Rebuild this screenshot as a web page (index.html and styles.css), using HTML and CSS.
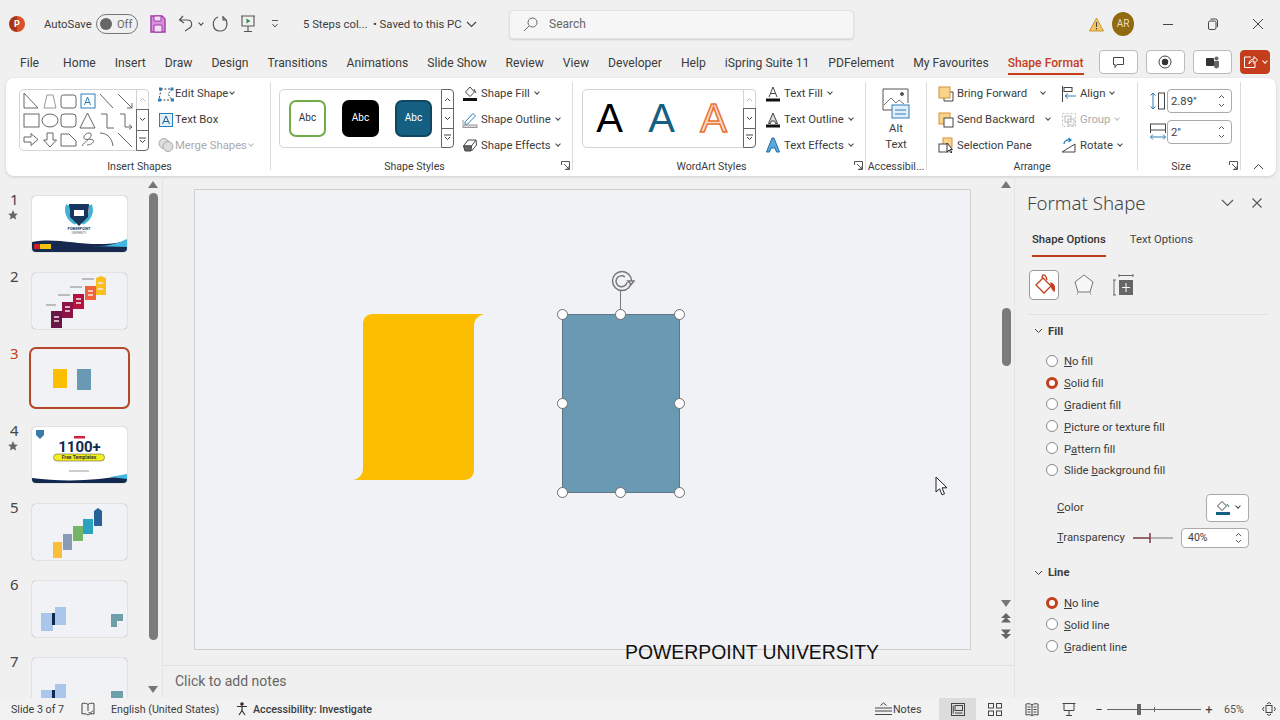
FILE: index.html
```html
<!DOCTYPE html>
<html lang="en">

<head>
    <meta charset="UTF-8">
    <meta name="viewport" content="width=device-width, initial-scale=1.0">
    <title>Format Shape</title>
    <link rel="stylesheet" href="styles.css">
</head>

<body>
    <div class="titlebar">
        <div class="app-logo">P</div>
        <span class="autosave">AutoSave</span>
        <div class="toggle"><span class="toggle-knob"></span><span>Off</span></div>
        <svg class="save-icon" width="16" height="18" viewBox="0 0 16 18"><path d="M1 1h11l3 3v13H1z" fill="#d98fdc" stroke="#a03aa8" stroke-width="1.4"/><path d="M4 1h7v5H4zM4 10h8v7H4z" fill="#f3dff3" stroke="#a03aa8"/></svg>
        <svg class="undo-icon" width="16" height="18" viewBox="0 0 16 18" fill="none" stroke="#555" stroke-width="1.2"><path d="M5 1L1.500 5 6 8M2 5h7c6 0 6 7 1 9l-3 2"/></svg>
        <span class="caret small-caret"></span>
        <svg class="redo-icon" width="16" height="18" viewBox="0 0 16 18" fill="none" stroke="#555" stroke-width="1.2"><path d="M6 2C-1 5 0 16 8 16s9-10 3-14M11 1v4h4"/></svg>
        <svg class="present-icon" width="16" height="18" viewBox="0 0 16 18" fill="none" stroke="#555" stroke-width="1.1"><path d="M1 1h14M2 1v10h12V1M8 11v5M4 16.500h8"/><path d="M6.500 3.500l4 2.500-4 2.500z" fill="#2e8b57" stroke="none"/></svg>
        <svg class="customize-icon" width="10" height="10" viewBox="0 0 10 10" fill="none" stroke="#555"><path d="M2 1.500h6M2.500 5l2.500 3 2.500-3"/></svg>
        <span class="doc-name">5 Steps col...</span>
        <span class="doc-state">• Saved to this PC</span>
        <svg class="doc-chevron" width="11" height="7" viewBox="0 0 11 7" fill="none" stroke="#444" stroke-width="1.1"><path d="M1 1l4.500 4.500L10 1"/></svg>
        <div class="search">
            <svg width="15" height="15" viewBox="0 0 15 15" fill="none" stroke="#666"><circle cx="9.500" cy="5.500" r="4.500"/><path d="M6 9l-5 5"/></svg>
            <span>Search</span>
        </div>
        <div class="title-right">
            <svg class="warn-icon" width="15" height="15" viewBox="0 0 15 15"><path d="M7.500 1L14.500 14H.5z" fill="#f6c667" stroke="#b8860b" stroke-width=".8"/><path d="M7.500 5v5M7.500 11v1.500" stroke="#444" stroke-width="1.1"/></svg>
            <div class="avatar">AR</div>
            <svg class="win-min" width="12" height="12" viewBox="0 0 12 12" stroke="#444"><path d="M1 6.500h10"/></svg>
            <svg class="win-restore" width="12" height="12" viewBox="0 0 12 12" fill="none" stroke="#444"><rect x="1.500" y="3" width="7.500" height="8.500" rx="1.500"/><path d="M3.500 1h5a2 2 0 012 2v6"/></svg>
            <svg class="win-close" width="12" height="12" viewBox="0 0 12 12" stroke="#444"><path d="M1 1l10 10M11 1L1 11"/></svg>
        </div>
    </div>

    <div class="tabs">
        <span class="tab tab-file">File</span>
        <span class="tab">Home</span>
        <span class="tab">Insert</span>
        <span class="tab">Draw</span>
        <span class="tab">Design</span>
        <span class="tab">Transitions</span>
        <span class="tab">Animations</span>
        <span class="tab">Slide Show</span>
        <span class="tab">Review</span>
        <span class="tab">View</span>
        <span class="tab">Developer</span>
        <span class="tab">Help</span>
        <span class="tab">iSpring Suite 11</span>
        <span class="tab">PDFelement</span>
        <span class="tab">My Favourites</span>
        <span class="tab tab-active">Shape Format</span>
        <div class="tab-buttons">
            <div class="tab-button"><svg width="13" height="13" viewBox="0 0 13 13" fill="none" stroke="#444"><path d="M1.500 1.500h10v7H5L3 11.500v-3H1.500z"/></svg></div>
            <div class="tab-button"><svg width="14" height="14" viewBox="0 0 14 14"><circle cx="7" cy="7" r="6" fill="none" stroke="#444"/><circle cx="7" cy="7" r="3.200" fill="#333"/></svg></div>
            <div class="tab-button"><svg width="15" height="14" viewBox="0 0 15 14"><rect x="1" y="3" width="8" height="8" rx="1" fill="#333"/><circle cx="11.500" cy="3.500" r="2" fill="#666"/><path d="M9 6h5v5a2.500 2.500 0 01-5 0z" fill="#666"/></svg></div>
            <div class="share-button">
                <svg width="15" height="14" viewBox="0 0 15 14" fill="none" stroke="#fff"><path d="M8 2H1.500v10.500H12V8M6 9c0-3 2-5 5-5V1.500L14.500 5 11 8.500V6C9 6 7 7 6 9z"/></svg>
                <span class="caret caret-white"></span>
            </div>
        </div>
    </div>

    <div class="ribbon">
        <div class="group group-shapes">
            <div class="group-body">
                <div class="gallery gallery-shapes">
                    <svg class="shapes-svg" width="116" height="59" viewBox="0 0 116 59" fill="none" stroke="#666" stroke-width="1">
                        <path d="M4 3v15h14z"/>
                        <path d="M24 18l3-13h6l3 13z" stroke="#999"/>
                        <rect x="41" y="5" width="15" height="13" rx="2.500"/>
                        <rect x="61" y="4" width="14" height="14" stroke="#2b7fb8"/>
                        <path d="M64.500 15l3-8 3 8M65.500 12.500h4" stroke="#2b7fb8"/>
                        <path d="M80 4l13 14"/>
                        <path d="M98 4l14 14M112 13v5h-5"/>
                        <rect x="4" y="24" width="15" height="13"/>
                        <ellipse cx="30" cy="30.500" rx="8" ry="6.500"/>
                        <rect x="41" y="24" width="15" height="13" rx="3"/>
                        <path d="M60 38l7.500-15L75 38z"/>
                        <path d="M81 24h6v14h7"/>
                        <path d="M100 24h5v13h6M109 34.500l3 2.500-3 2.500"/>
                        <path d="M4 47h7v-3.500l7 6-7 6V52H4z"/>
                        <path d="M27 43h6v7h3.500l-6.500 7-6.500-7H27z"/>
                        <path d="M41 44h8l7 7v5H41z"/>
                        <path d="M62 56c2-4 11-9 9-12s-8 1-7 4 7 0 9 2-2 5-6 5"/>
                        <path d="M80 43c7 0 12 5 13 13"/>
                        <path d="M98 43l14 14"/>
                    </svg>
                    <div class="gal-scroll">
                        <div class="gal-btn gal-off"><svg width="7" height="5" viewBox="0 0 7 5" fill="none" stroke="#bbb"><path d="M1 4l2.500-2.500L6 4"/></svg></div>
                        <div class="gal-btn gal-on"><svg width="7" height="5" viewBox="0 0 7 5" fill="none" stroke="#444"><path d="M1 1l2.500 2.500L6 1"/></svg></div>
                        <div class="gal-btn gal-on gal-last"><svg width="7" height="7" viewBox="0 0 7 7" fill="none" stroke="#444"><path d="M0 1h7M1 3l2.500 2.500L6 3"/></svg></div>
                    </div>
                </div>
                <div class="cmds cmds-edit">
                    <div class="cmd">
                        <svg width="18" height="16" viewBox="0 0 18 16" fill="none" stroke="#444"><path d="M4 3h11M3 14h13M15 3l-4 5 4 6M4 3L2 14" stroke-dasharray="2 1.500"/><rect x="2" y="1.500" width="3" height="3" fill="#2b7fb8" stroke="none"/><rect x="13.500" y="1.500" width="3" height="3" fill="#2b7fb8" stroke="none"/><rect x="1" y="12.500" width="3" height="3" fill="#2b7fb8" stroke="none"/><rect x="14" y="12.500" width="3" height="3" fill="#2b7fb8" stroke="none"/></svg>
                        <span>Edit Shape</span><span class="caret"></span>
                    </div>
                    <div class="cmd">
                        <svg width="18" height="16" viewBox="0 0 18 16" fill="none" stroke="#2b7fb8"><rect x="2.500" y="1.500" width="13" height="13" fill="#e2eff8"/><path d="M5.500 12l3.500-8 3.500 8M6.800 9.500h4.400" stroke="#1f5f8b"/></svg>
                        <span>Text Box</span>
                    </div>
                    <div class="cmd cmd-off">
                        <svg width="18" height="16" viewBox="0 0 18 16" fill="#ddd" stroke="#aaa"><circle cx="7" cy="6.500" r="5"/><circle cx="11" cy="9.500" r="5"/></svg>
                        <span>Merge Shapes</span><span class="caret caret-off"></span>
                    </div>
                </div>
            </div>
            <div class="group-label">Insert Shapes</div>
        </div>
        <div class="ribbon-sep"></div>

        <div class="group group-styles">
            <div class="group-body">
                <div class="gallery gallery-styles">
                    <div class="abc-row">
                        <div class="abc abc-green">Abc</div>
                        <div class="abc abc-black">Abc</div>
                        <div class="abc abc-blue">Abc</div>
                    </div>
                    <div class="gal-scroll">
                        <div class="gal-btn gal-on"><svg width="7" height="5" viewBox="0 0 7 5" fill="none" stroke="#444"><path d="M1 4l2.500-2.500L6 4"/></svg></div>
                        <div class="gal-btn gal-on"><svg width="7" height="5" viewBox="0 0 7 5" fill="none" stroke="#444"><path d="M1 1l2.500 2.500L6 1"/></svg></div>
                        <div class="gal-btn gal-on gal-last"><svg width="7" height="7" viewBox="0 0 7 7" fill="none" stroke="#444"><path d="M0 1h7M1 3l2.500 2.500L6 3"/></svg></div>
                    </div>
                </div>
                <div class="cmds cmds-fill">
                    <div class="cmd">
                        <svg width="16" height="16" viewBox="0 0 16 16" fill="none" stroke="#444"><path d="M8 1l4.500 5L8 10.500 3.500 6z"/><path d="M12 3l2 4"/><rect x="1" y="12" width="14" height="3" fill="#111" stroke="none"/></svg>
                        <span>Shape Fill</span><span class="caret"></span>
                    </div>
                    <div class="cmd">
                        <svg width="16" height="16" viewBox="0 0 16 16" fill="none" stroke="#2b7fb8"><path d="M3 10L11 1.500l2.500 2.500L5.500 12 3 12.500z"/><path d="M1 8v4" stroke="#999"/><rect x="1" y="13" width="14" height="2.500" fill="#ddd" stroke="#999"/></svg>
                        <span>Shape Outline</span><span class="caret"></span>
                    </div>
                    <div class="cmd">
                        <svg width="16" height="16" viewBox="0 0 16 16" stroke="#444"><path d="M1.500 9L6 3h8L9.500 9z" fill="#fff"/><path d="M1.500 9l1.500 5h6l.5-5z" fill="#666"/><path d="M14 3l.5 5-5 6" fill="none"/></svg>
                        <span>Shape Effects</span><span class="caret"></span>
                    </div>
                </div>
            </div>
            <div class="group-label">Shape Styles</div>
            <svg class="launcher" width="9" height="9" viewBox="0 0 9 9" fill="none" stroke="#555"><path d="M.5 4V.5H8.500V8.500H4M3 3l5 5M8 5v3H5"/></svg>
        </div>
        <div class="ribbon-sep"></div>

        <div class="group group-wordart">
            <div class="group-body">
                <div class="gallery gallery-wordart">
                    <div class="wa-row">
                        <span class="wa wa-black">A</span>
                        <span class="wa wa-blue">A</span>
                        <span class="wa wa-orange">A</span>
                    </div>
                    <div class="gal-scroll">
                        <div class="gal-btn gal-off"><svg width="7" height="5" viewBox="0 0 7 5" fill="none" stroke="#bbb"><path d="M1 4l2.500-2.500L6 4"/></svg></div>
                        <div class="gal-btn gal-on"><svg width="7" height="5" viewBox="0 0 7 5" fill="none" stroke="#444"><path d="M1 1l2.500 2.500L6 1"/></svg></div>
                        <div class="gal-btn gal-on gal-last"><svg width="7" height="7" viewBox="0 0 7 7" fill="none" stroke="#444"><path d="M0 1h7M1 3l2.500 2.500L6 3"/></svg></div>
                    </div>
                </div>
                <div class="cmds cmds-text">
                    <div class="cmd">
                        <svg width="16" height="16" viewBox="0 0 16 16" fill="none" stroke="#444"><path d="M4 11l4-10 4 10M5.500 7.500h5"/><rect x="1" y="12.500" width="14" height="3" fill="#111" stroke="none"/></svg>
                        <span>Text Fill</span><span class="caret"></span>
                    </div>
                    <div class="cmd">
                        <svg width="16" height="16" viewBox="0 0 16 16" fill="#ddd" stroke="#444"><path d="M3.500 11.500L8 1l4.500 10.500h-2L9.800 9H6.200l-.7 2.500z"/><rect x="1" y="12.500" width="14" height="3" fill="#111" stroke="none"/></svg>
                        <span>Text Outline</span><span class="caret"></span>
                    </div>
                    <div class="cmd">
                        <svg width="16" height="16" viewBox="0 0 16 16" fill="#5fa8dc" stroke="#1f6fa8"><path d="M1.500 15L7 1h2l5.500 14h-3L10 11H6l-1.500 4z"/></svg>
                        <span>Text Effects</span><span class="caret"></span>
                    </div>
                </div>
            </div>
            <div class="group-label">WordArt Styles</div>
            <svg class="launcher" width="9" height="9" viewBox="0 0 9 9" fill="none" stroke="#555"><path d="M.5 4V.5H8.500V8.500H4M3 3l5 5M8 5v3H5"/></svg>
        </div>
        <div class="ribbon-sep"></div>

        <div class="group group-alt">
            <div class="group-body alt-body">
                <svg width="28" height="32" viewBox="0 0 28 32" fill="none" stroke="#555"><path d="M10 22H1V1h25v14"/><path d="M2 17l7-7 5 5 3-3 5 4" stroke="#777"/><circle cx="20" cy="6" r="1.500" fill="#555"/><rect x="10" y="17" width="17" height="13" fill="#e2eff8" stroke="#2b7fb8"/><path d="M13 22h11M13 26h11" stroke="#2b7fb8"/></svg>
                <span class="alt-text">Alt<br>Text</span>
            </div>
            <div class="group-label">Accessibil...</div>
        </div>
        <div class="ribbon-sep"></div>

        <div class="group group-arrange">
            <div class="group-body">
                <div class="cmds cmds-order">
                    <div class="cmd">
                        <svg width="16" height="16" viewBox="0 0 16 16"><path d="M12 6h3v9H6v-3" fill="none" stroke="#444"/><rect x="1" y="1" width="11" height="11" fill="#f9d38a" stroke="#d8913a"/></svg>
                        <span class="cmd-wide">Bring Forward</span><span class="caret"></span>
                    </div>
                    <div class="cmd">
                        <svg width="16" height="16" viewBox="0 0 16 16"><rect x="1" y="1" width="11" height="11" fill="#f9d38a" stroke="#d8913a"/><rect x="6" y="6" width="9" height="9" fill="#fff" stroke="#444"/></svg>
                        <span class="cmd-wider">Send Backward</span><span class="caret"></span>
                    </div>
                    <div class="cmd">
                        <svg width="16" height="16" viewBox="0 0 16 16"><rect x="5" y="1" width="9" height="9" fill="#f9d38a" stroke="#d8913a"/><rect x="1" y="7" width="9" height="8" fill="#fff" stroke="#444"/><path d="M9 6v9l2-2 2 3 1-1-2-2.500h2.500z" fill="#fff" stroke="#333"/></svg>
                        <span>Selection Pane</span>
                    </div>
                </div>
                <div class="cmds cmds-align">
                    <div class="cmd">
                        <svg width="16" height="16" viewBox="0 0 16 16" fill="none" stroke="#444"><path d="M1.500 0v16"/><rect x="3" y="1.500" width="8" height="4"/><path d="M15 10H4M7 7.500L4 10l3 2.500" stroke="#2b7fb8"/></svg>
                        <span>Align</span><span class="caret"></span>
                    </div>
                    <div class="cmd cmd-off">
                        <svg width="16" height="16" viewBox="0 0 16 16" fill="none" stroke="#bbb"><rect x="1.500" y="1.500" width="13" height="13" stroke-dasharray="2 2"/><rect x="4" y="4" width="6" height="6"/><rect x="7" y="7" width="6" height="6"/></svg>
                        <span>Group</span><span class="caret caret-off"></span>
                    </div>
                    <div class="cmd">
                        <svg width="16" height="16" viewBox="0 0 16 16" fill="none" stroke="#444"><path d="M1 15L14 7v8z"/><path d="M3 7c0-3 3-5 7-4M7.500 1l2.500 2-2.500 2" stroke="#2b7fb8" stroke-width="1.300"/></svg>
                        <span>Rotate</span><span class="caret"></span>
                    </div>
                </div>
            </div>
            <div class="group-label">Arrange</div>
        </div>
        <div class="ribbon-sep"></div>

        <div class="group group-size">
            <div class="group-body size-body">
                <div class="size-row">
                    <svg width="18" height="20" viewBox="0 0 18 20" fill="none"><path d="M4 2v16M1.500 4.500L4 2l2.500 2.500M1.500 15.500L4 18l2.500-2.500" stroke="#2b7fb8"/><rect x="9.500" y="2" width="6" height="16" stroke="#444"/></svg>
                    <div class="spin"><span>2.89"</span><div class="spin-arrows"><svg width="7" height="5" viewBox="0 0 7 5" fill="none" stroke="#555"><path d="M1 4l2.500-2.500L6 4"/></svg><svg width="7" height="5" viewBox="0 0 7 5" fill="none" stroke="#555"><path d="M1 1l2.500 2.500L6 1"/></svg></div></div>
                </div>
                <div class="size-row">
                    <svg width="18" height="20" viewBox="0 0 18 20" fill="none"><rect x="1.500" y="2" width="15" height="6" stroke="#444"/><path d="M1.500 8v3M16.500 8v3" stroke="#444"/><path d="M1.500 15h15M4 12.500L1.500 15 4 17.500M14 12.500l2.500 2.500-2.500 2.500" stroke="#2b7fb8"/></svg>
                    <div class="spin"><span>2"</span><div class="spin-arrows"><svg width="7" height="5" viewBox="0 0 7 5" fill="none" stroke="#555"><path d="M1 4l2.500-2.500L6 4"/></svg><svg width="7" height="5" viewBox="0 0 7 5" fill="none" stroke="#555"><path d="M1 1l2.500 2.500L6 1"/></svg></div></div>
                </div>
            </div>
            <div class="group-label">Size</div>
            <svg class="launcher" width="9" height="9" viewBox="0 0 9 9" fill="none" stroke="#555"><path d="M.5 4V.5H8.500V8.500H4M3 3l5 5M8 5v3H5"/></svg>
        </div>
        <div class="ribbon-sep"></div>
        <svg class="ribbon-collapse" width="11" height="7" viewBox="0 0 11 7" fill="none" stroke="#444"><path d="M1 6l4.500-4.500L10 6"/></svg>
    </div>

    <div class="main">
        <div class="slides-panel">
            <div class="slides-list">
                <div class="slide-row">
                    <div class="slide-num">1<svg width="10" height="10" viewBox="0 0 10 10"><path d="M5 0l1.500 3.400 3.500.3-2.700 2.300.8 3.600L5 7.700 1.900 9.600l.8-3.600L0 3.700l3.500-.3z" fill="#666"/></svg></div>
                    <div class="thumb thumb-white">
                        <svg width="95" height="56" viewBox="0 0 95 56">
                            <path d="M36 9c-3 7 1 15 8 18M58 9c3 7-1 15-8 18" fill="none" stroke="#3fb4d4" stroke-width="4"/>
                            <path d="M37 8h20l-1 13-9 9-9-9z" fill="#17375e"/>
                            <rect x="42" y="14" width="10" height="6" fill="#fff"/>
                            <text x="47" y="34" text-anchor="middle" font-size="3.600" font-weight="700" fill="#17375e" font-family="Liberation Sans">POWERPOINT</text>
                            <text x="47" y="38" text-anchor="middle" font-size="2.600" fill="#555" font-family="Liberation Sans">UNIVERSITY</text>
                            <path d="M0 46c30-6 55 8 95-1v11H0z" fill="#17294f"/>
                            <path d="M60 50c14 1 24-2 35-7v8z" fill="#45b6e0"/>
                            <rect x="2" y="48" width="6" height="5" fill="#c8202f"/>
                            <rect x="8" y="48" width="11" height="5" fill="#f2c40f"/>
                        </svg>
                    </div>
                </div>
                <div class="slide-row">
                    <div class="slide-num">2</div>
                    <div class="thumb">
                        <svg width="95" height="56" viewBox="0 0 95 56">
                            <rect x="19" y="38" width="11" height="17" fill="#6b1648"/>
                            <rect x="30" y="29" width="11" height="16" fill="#8c1345"/>
                            <rect x="41" y="21" width="11" height="15" fill="#b5123f"/>
                            <rect x="53" y="13" width="11" height="14" fill="#f0643c"/>
                            <path d="M64 5l5-2 5 2v17H64z" fill="#fbbe1e"/>
                            <path d="M22 44h5M22 48h5M33 34h5M33 38h5M44 26h5M44 30h5M56 18h5M56 22h5M66 10h5M66 16h5" stroke="#f4e6e6" stroke-width="1.500"/>
                            <path d="M14 32h10M26 22h12M38 14h12M50 6h12" stroke="#aaa" stroke-width="1.500"/>
                        </svg>
                    </div>
                </div>
                <div class="slide-row">
                    <div class="slide-num slide-num-active">3</div>
                    <div class="thumb thumb-active">
                        <svg width="95" height="56" viewBox="0 0 95 56">
                            <rect x="21" y="19" width="14" height="19" fill="#fdbd00"/>
                            <rect x="45" y="19" width="14" height="21" fill="#6a99b3"/>
                        </svg>
                    </div>
                </div>
                <div class="slide-row">
                    <div class="slide-num">4<svg width="10" height="10" viewBox="0 0 10 10"><path d="M5 0l1.500 3.400 3.500.3-2.700 2.300.8 3.600L5 7.700 1.900 9.600l.8-3.600L0 3.700l3.500-.3z" fill="#666"/></svg></div>
                    <div class="thumb thumb-white">
                        <svg width="95" height="56" viewBox="0 0 95 56">
                            <path d="M4 3h8v5l-4 4-4-4z" fill="#3a7ca5"/>
                            <rect x="42" y="9" width="11" height="2.500" fill="#d0213c"/>
                            <text x="47.500" y="25" text-anchor="middle" font-size="15" font-weight="700" fill="#12294f" font-family="Liberation Sans">1100+</text>
                            <rect x="21.500" y="27" width="51" height="7" rx="3.500" fill="#f2ee20" stroke="#444" stroke-width=".5"/>
                            <text x="47" y="32.300" text-anchor="middle" font-size="5" font-weight="700" fill="#333" font-family="Liberation Sans">Free Templates</text>
                            <path d="M37 44h20" stroke="#999" stroke-width="1"/>
                            <path d="M0 51c30 4 65 3 95-3v8H0z" fill="#12294f"/>
                            <path d="M78 50l17-3v5z" fill="#45b6e0"/>
                        </svg>
                    </div>
                </div>
                <div class="slide-row">
                    <div class="slide-num">5</div>
                    <div class="thumb">
                        <svg width="95" height="56" viewBox="0 0 95 56">
                            <rect x="21" y="38" width="9" height="16" fill="#f9bf3b"/>
                            <rect x="31" y="30" width="9" height="16" fill="#8a9bb5"/>
                            <rect x="41" y="22" width="10" height="15" fill="#74b567"/>
                            <rect x="51" y="15" width="10" height="15" fill="#2ba3bf"/>
                            <path d="M62 7l4-3 4 3v15h-8z" fill="#27629b"/>
                        </svg>
                    </div>
                </div>
                <div class="slide-row">
                    <div class="slide-num">6</div>
                    <div class="thumb">
                        <svg width="95" height="56" viewBox="0 0 95 56">
                            <rect x="9" y="32" width="12" height="18" fill="#aac6ea"/>
                            <rect x="23" y="26" width="11" height="18" fill="#aac6ea"/>
                            <rect x="20" y="32" width="3" height="12" fill="#12294f"/>
                            <path d="M79 33h12v7h-6v6h-6z" fill="#6f9fa8"/>
                        </svg>
                    </div>
                </div>
                <div class="slide-row">
                    <div class="slide-num">7</div>
                    <div class="thumb">
                        <svg width="95" height="56" viewBox="0 0 95 56">
                            <rect x="9" y="32" width="12" height="18" fill="#aac6ea"/>
                            <rect x="23" y="26" width="11" height="18" fill="#aac6ea"/>
                            <rect x="20" y="32" width="3" height="12" fill="#12294f"/>
                            <path d="M79 33h12v7h-6v6h-6z" fill="#6f9fa8"/>
                        </svg>
                    </div>
                </div>
            </div>
            <div class="panel-scroll">
                <span class="arrow-up"></span>
                <div class="panel-thumb"></div>
                <span class="arrow-down"></span>
            </div>
        </div>

        <div class="editor">
            <div class="canvas-area">
                <div class="slide">
                    <svg class="shape-yellow" width="132" height="166" viewBox="0 0 132 166"><path d="M0 166c6-1 10-5 10-12V10C10 4 14 0 20 0h111c-6 2-10 5-10 12v144c0 6-4 10-10 10z" fill="#fdbd00"/></svg>
                    <div class="shape-blue">
                        <span class="handle h-tl"></span><span class="handle h-tc"></span><span class="handle h-tr"></span>
                        <span class="handle h-ml"></span><span class="handle h-mr"></span>
                        <span class="handle h-bl"></span><span class="handle h-bc"></span><span class="handle h-br"></span>
                        <span class="rotate-line"></span>
                        <svg class="rotate-icon" width="24" height="24" viewBox="0 0 24 24" fill="none" stroke="#777" stroke-width="1.500"><circle cx="11" cy="12" r="9.500"/><path d="M16 13a5.500 5.500 0 11-2-5"/><path d="M17 12l3 3.500 3-3.500z" fill="#fff"/></svg>
                    </div>
                </div>
                <div class="canvas-scroll">
                    <span class="arrow-up"></span>
                    <div class="canvas-thumb"></div>
                    <span class="arrow-down"></span>
                    <svg class="page-arrow" width="10" height="10" viewBox="0 0 10 10" fill="#666"><path d="M5 0L10 5H0zM5 4L10 9.500H0z"/></svg>
                    <svg class="page-arrow" width="10" height="10" viewBox="0 0 10 10" fill="#666"><path d="M5 6L10 .5H0zM5 10L10 5H0z"/></svg>
                </div>
            </div>
            <div class="notes-bar">Click to add notes</div>
        </div>

        <div class="format-pane">
            <div class="pane-head">
                <span class="pane-title">Format Shape</span>
                <svg class="pane-chevron" width="13" height="8" viewBox="0 0 13 8" fill="none" stroke="#555" stroke-width="1.100"><path d="M1 1l5.500 5.500L12 1"/></svg>
                <svg class="pane-close" width="10" height="10" viewBox="0 0 10 10" stroke="#555" stroke-width="1.100"><path d="M.5.5l9 9M9.500.5l-9 9"/></svg>
            </div>
            <div class="pane-tabs">
                <span class="pane-tab pane-tab-active">Shape Options</span>
                <span class="pane-tab">Text Options</span>
            </div>
            <div class="pane-icons">
                <div class="pane-icon pane-icon-active">
                    <svg width="24" height="24" viewBox="0 0 24 24" fill="none" stroke="#c43e1c" stroke-width="1.300"><path d="M11 5l8 8-7 7-8-8z"/><path d="M10 5c0-4 3-4 4-1l1 3"/><path d="M19 10c3 1 4 4 3 8-2-2-3-4-3-8z" fill="#c43e1c"/></svg>
                </div>
                <svg class="pane-icon-pent" width="22" height="24" viewBox="0 0 22 24" fill="none" stroke="#777"><path d="M11 2l9 7-3 10H5L2 9z" fill="#f7f7f7"/><path d="M5 19l-1 3M17 19l1 3" stroke="#aaa"/></svg>
                <svg class="pane-icon-size" width="21" height="22" viewBox="0 0 21 22" fill="none" stroke="#666"><path d="M6 1.500h14M6 0v3M20 0v3M1 6v15M0 6h3M0 21h3"/><rect x="6" y="6" width="14" height="15" fill="#666" stroke="none"/><path d="M13 9v9M9 13.500h8" stroke="#fff"/></svg>
            </div>
            <div class="pane-rule"></div>

            <div class="section-head">
                <svg width="9" height="6" viewBox="0 0 9 6" fill="none" stroke="#444"><path d="M1 1l3.500 3.500L8 1"/></svg>
                <span>Fill</span>
            </div>
            <div class="radios">
                <div class="radio-row"><span class="radio"></span><span><u>N</u>o fill</span></div>
                <div class="radio-row"><span class="radio radio-on"></span><span><u>S</u>olid fill</span></div>
                <div class="radio-row"><span class="radio"></span><span><u>G</u>radient fill</span></div>
                <div class="radio-row"><span class="radio"></span><span><u>P</u>icture or texture fill</span></div>
                <div class="radio-row"><span class="radio"></span><span>P<u>a</u>ttern fill</span></div>
                <div class="radio-row"><span class="radio"></span><span>Slide <u>b</u>ackground fill</span></div>
            </div>
            <div class="color-row">
                <span><u>C</u>olor</span>
                <div class="color-btn">
                    <svg width="16" height="16" viewBox="0 0 16 16" fill="none" stroke="#444"><path d="M7 1.500l4.500 4.500L7 10.500 2.500 6z"/><path d="M12 4l2 3" stroke="#156082"/><rect x="1" y="12" width="14" height="3" fill="#156082" stroke="none"/></svg>
                    <span class="caret"></span>
                </div>
            </div>
            <div class="trans-row">
                <span><u>T</u>ransparency</span>
                <svg class="trans-slider" width="40" height="12" viewBox="0 0 40 12"><path d="M0 6h17" stroke="#7a3a44" stroke-width="1.500"/><path d="M17 6h23" stroke="#777"/><path d="M17 1v10" stroke="#7a3a44" stroke-width="1.500"/></svg>
                <div class="spin spin-trans"><span>40%</span><div class="spin-arrows"><svg width="7" height="5" viewBox="0 0 7 5" fill="none" stroke="#555"><path d="M1 4l2.500-2.500L6 4"/></svg><svg width="7" height="5" viewBox="0 0 7 5" fill="none" stroke="#555"><path d="M1 1l2.500 2.500L6 1"/></svg></div></div>
            </div>
            <div class="section-head section-line">
                <svg width="9" height="6" viewBox="0 0 9 6" fill="none" stroke="#444"><path d="M1 1l3.500 3.500L8 1"/></svg>
                <span>Line</span>
            </div>
            <div class="radios">
                <div class="radio-row"><span class="radio radio-on"></span><span><u>N</u>o line</span></div>
                <div class="radio-row"><span class="radio"></span><span><u>S</u>olid line</span></div>
                <div class="radio-row"><span class="radio"></span><span><u>G</u>radient line</span></div>
            </div>
        </div>
    </div>

    <div class="statusbar">
        <span class="st-slide">Slide 3 of 7</span>
        <svg class="st-book" width="14" height="14" viewBox="0 0 14 14" fill="none" stroke="#444"><path d="M7 2.500C5.500 1 3 1 1 1.500V12c2-.5 4-.5 6 1 2-1.500 4-1.500 6-1V1.500C11 1 8.500 1 7 2.500zM7 2.500V9"/><path d="M7.500 10l1.500 1.500 3-3"/></svg>
        <span class="st-lang">English (United States)</span>
        <svg class="st-access" width="14" height="14" viewBox="0 0 14 14" fill="none" stroke="#333" stroke-width="1.200"><circle cx="6" cy="2" r="1.200" fill="#333"/><path d="M1 4.500h10M6 4.500v4M6 8.500L3 13M6 8.500l3 4.500"/></svg>
        <span class="st-check">Accessibility: Investigate</span>
        <div class="st-right">
            <svg class="st-notes-icon" width="17" height="14" viewBox="0 0 17 14" fill="none" stroke="#444"><path d="M5.500 3.500L8.500 1l3 2.500M0 6h17M0 9h17M0 12.500h17"/></svg>
            <span class="st-notes">Notes</span>
            <div class="view-btn view-active"><svg width="14" height="13" viewBox="0 0 14 13" fill="none" stroke="#444"><rect x=".5" y=".5" width="13" height="12"/><rect x="4" y="2.500" width="7.500" height="5"/><path d="M2.200 2.500v8M4 10h7.500"/></svg></div>
            <div class="view-btn"><svg width="14" height="13" viewBox="0 0 14 13" fill="none" stroke="#444"><rect x=".5" y=".5" width="5" height="4.500"/><rect x="8.500" y=".5" width="5" height="4.500"/><rect x=".5" y="8" width="5" height="4.500"/><rect x="8.500" y="8" width="5" height="4.500"/></svg></div>
            <div class="view-btn"><svg width="14" height="13" viewBox="0 0 14 13" fill="none" stroke="#444"><path d="M7 2C5 .5 3 .5 1 1v11c2-.5 4-.5 6 .5 2-1 4-1 6-.5V1c-2-.5-4-.5-6 1zM7 2v10.500M2.500 4h3M2.500 6.500h3M2.500 9h3M8.500 4h3M8.500 6.500h3M8.500 9h3"/></svg></div>
            <div class="view-btn"><svg width="14" height="13" viewBox="0 0 14 13" fill="none" stroke="#444"><path d="M.5.500h13M2 .5v7h10v-7M7 7.500V12M4 12.500h6"/></svg></div>
            <span class="zoom-sign zoom-minus">−</span>
            <div class="zoom-track"><span class="zoom-knob"></span><span class="zoom-mid"></span></div>
            <span class="zoom-sign">+</span>
            <span class="zoom-val">65%</span>
            <svg class="zoom-fit" width="14" height="14" viewBox="0 0 14 14" fill="none" stroke="#444"><rect x="4" y="3.500" width="6" height="7"/><path d="M5 2l2-1.500L9 2M5 12l2 1.500L9 12M2 5L.5 7 2 9M12 5l1.500 2L12 9"/></svg>
        </div>
    </div>

    <span class="watermark">POWERPOINT UNIVERSITY</span>
    <svg class="cursor" width="13" height="20" viewBox="0 0 13 20"><path d="M1 1v15l3.500-3.200 2.500 6 2.500-1-2.500-6H12z" fill="#fff" stroke="#222"/></svg>
</body>

</html>
```

FILE: styles.css
```css
* {
    margin: 0;
    padding: 0;
    box-sizing: border-box;
    font-family: Roboto, "Noto Sans", sans-serif;
}

body {
    position: relative;
    width: 1280px;
    height: 720px;
    overflow: hidden;
    background-color: #f0f0f0;
    color: #3c3c3c;
    font-size: 11.3px;
    display: flex;
    flex-direction: column;
}

svg {
    display: block;
    flex: none;
}

.caret {
    display: inline-block;
    width: 4px;
    height: 4px;
    margin-left: 2px;
    margin-top: -3px;
    border-right: 1px solid #444;
    border-bottom: 1px solid #444;
    transform: rotate(45deg);
    flex: none;
}

.small-caret {
    margin-left: 5px;
}

.caret-white {
    border-color: #fff;
    margin-left: 5px;
}

.caret-off {
    border-color: #bbb;
}

/* title bar */
.titlebar {
    height: 48px;
    display: flex;
    align-items: center;
    flex: none;
    padding-left: 9px;
}

.app-logo {
    width: 16px;
    height: 16px;
    border-radius: 50%;
    background: linear-gradient(90deg, #a93415 50%, #d9512c 50%);
    color: white;
    font-size: 9px;
    font-weight: 700;
    line-height: 16px;
    text-align: center;
}

.autosave {
    margin-left: 19px;
    width: 46px;
    white-space: nowrap;
}

.toggle {
    margin-left: 6px;
    width: 42px;
    height: 20px;
    border: 1px solid #777;
    border-radius: 10px;
    display: flex;
    align-items: center;
    gap: 5px;
    padding-left: 3px;
    font-size: 11px;
    color: #666;
}

.toggle-knob {
    width: 12px;
    height: 12px;
    border-radius: 50%;
    background-color: #666;
}

.save-icon {
    margin-left: 12px;
}

.undo-icon {
    margin-left: 12px;
}

.redo-icon {
    margin-left: 9px;
}

.present-icon {
    margin-left: 12px;
}

.customize-icon {
    margin-left: 14px;
}

.doc-name {
    margin-left: 23px;
    width: 62px;
    white-space: nowrap;
}

.doc-state {
    margin-left: 8px;
    width: 90px;
    white-space: nowrap;
}

.doc-chevron {
    margin-left: 3px;
}

.search {
    margin-left: 32px;
    width: 345px;
    height: 29px;
    background-color: #f6f6f6;
    border: 1px solid #e2e2e2;
    border-radius: 4px;
    box-shadow: 0 1px 2px rgba(0, 0, 0, 0.12);
    display: flex;
    align-items: center;
    gap: 11px;
    padding-left: 13px;
    color: #666;
    font-size: 12px;
}

.title-right {
    margin-left: auto;
    display: flex;
    align-items: center;
    padding-right: 16px;
}

.avatar {
    margin-left: 8px;
    width: 22px;
    height: 24px;
    border-radius: 50%;
    background-color: #8f6a10;
    color: #e8dcc0;
    font-size: 10px;
    line-height: 24px;
    text-align: center;
}

.win-min {
    margin-left: 28px;
}

.win-restore {
    margin-left: 33px;
}

.win-close {
    margin-left: 33px;
}

/* tabs */
.tabs {
    height: 30px;
    display: flex;
    align-items: flex-start;
    flex: none;
    padding: 5px 10px 0 20px;
    gap: 19px;
    font-size: 12.15px;
}

.tab {
    white-space: nowrap;
    line-height: 20px;
    height: 22px;
}

.tab-file {
    margin-right: 5px;
}

.tab-active {
    color: #c43e1c;
    font-weight: 500;
    border-bottom: 2px solid #c43e1c;
}

.tab-buttons {
    display: flex;
    gap: 8px;
    margin-left: -4px;
    margin-top: -3px;
}

.tab-button,
.share-button {
    width: 39px;
    height: 24px;
    background-color: white;
    border: 1px solid #bbb;
    border-radius: 4px;
    display: flex;
    align-items: center;
    justify-content: center;
}

.share-button {
    width: 30px;
    background-color: #c43e1c;
    border-color: #c43e1c;
}

/* ribbon */
.ribbon {
    height: 98px;
    margin: 0 4px 0 6px;
    background-color: white;
    border-radius: 8px;
    box-shadow: 0 1px 3px rgba(0, 0, 0, 0.15);
    display: flex;
    flex: none;
}

.ribbon-sep {
    width: 1px;
    margin: 4px 0 6px;
    background-color: #dcdcdc;
    flex: none;
}

.group {
    position: relative;
    display: flex;
    flex-direction: column;
    flex: none;
}

.group-body {
    height: 80px;
    display: flex;
    flex: none;
}

.group-label {
    height: 18px;
    line-height: 18px;
    text-align: center;
    font-size: 10.6px;
    white-space: nowrap;
}

.launcher {
    position: absolute;
    right: 2px;
    bottom: 6px;
}

.group-shapes {
    width: 264px;
    padding-left: 13px;
}

.group-shapes .group-label {
    margin-left: -5px;
    margin-right: 5px;
}

.group-styles {
    width: 301px;
    padding-left: 8px;
}

.group-styles .group-label {
    padding-right: 22px;
}

.group-wordart {
    width: 292px;
    padding-left: 9px;
}

.group-wordart .group-label {
    padding-right: 24px;
}

.group-alt {
    width: 60px;
}

.group-arrange {
    width: 210px;
    padding-left: 11px;
}

.group-arrange .group-label {
    margin-left: -11px;
}

.group-size {
    width: 102px;
}

.group-size .group-label {
    padding-right: 16px;
}

.gallery {
    margin-top: 11px;
    background-color: white;
    border: 1px solid #d4d4d4;
    border-radius: 5px;
    display: flex;
    justify-content: space-between;
    align-self: flex-start;
    flex: none;
}

.gallery-shapes {
    width: 130px;
    height: 62px;
}

.gallery-styles {
    width: 175px;
    height: 59px;
}

.gallery-wordart {
    width: 174px;
    height: 59px;
}

.gal-scroll {
    width: 13px;
    display: flex;
    flex-direction: column;
    margin: -1px -1px -1px 0;
    flex: none;
}

.gal-btn {
    flex: 1;
    display: flex;
    align-items: center;
    justify-content: center;
    border: 1px solid #666;
    margin-top: -1px;
    background-color: white;
}

.gal-btn:first-child {
    margin-top: 0;
    border-radius: 0 4px 0 0;
}

.gal-off {
    border-color: #d4d4d4;
}

.gal-last {
    border-radius: 0 0 4px 0;
}

.cmds {
    margin-top: 3px;
    display: flex;
    flex-direction: column;
    flex: none;
}

.cmd {
    height: 26px;
    display: flex;
    align-items: center;
    gap: 3px;
    white-space: nowrap;
}

.cmd-off {
    color: #aaa;
}

.cmds-edit {
    margin-left: 8px;
}

.cmds-edit .cmd {
    gap: 0;
}

.cmds-fill {
    margin-left: 8px;
}

.cmds-text {
    margin-left: 9px;
}

.cmds-align {
    margin-left: 0;
}

.cmds-order {
    width: 123px;
}

.cmd-wide {
    width: 79px;
}

.cmd-wider {
    width: 84px;
}

.abc-row {
    display: flex;
    gap: 16px;
    padding: 10px 0 0 9px;
}

.abc {
    width: 37px;
    height: 37px;
    border-radius: 7px;
    font-size: 10px;
    line-height: 31px;
    text-align: center;
    border: 2px solid transparent;
}

.abc-green {
    border-color: #70ad47;
    background-color: white;
    color: #333;
}

.abc-black {
    background-color: black;
    color: white;
}

.abc-blue {
    background-color: #156082;
    border-color: #0f4761;
    color: white;
}

.wa-row {
    display: flex;
    gap: 25px;
    padding-left: 13px;
    align-items: center;
}

.wa {
    font-family: "Liberation Sans", sans-serif;
    font-size: 40px;
    line-height: 57px;
    width: 27px;
    text-align: center;
}

.wa-black {
    color: black;
}

.wa-blue {
    color: #156082;
}

.wa-orange {
    color: #fbdccb;
    -webkit-text-stroke: 1.5px #e97132;
}

.alt-body {
    flex-direction: column;
    align-items: center;
    padding-top: 10px;
}

.alt-text {
    margin-top: 1px;
    line-height: 16px;
    text-align: center;
}

.size-body {
    flex-direction: column;
    gap: 7px;
    padding: 11px 0 0 11px;
}

.size-row {
    display: flex;
    align-items: center;
}

.spin {
    width: 65px;
    height: 24px;
    background-color: white;
    border: 1px solid #aaa;
    border-radius: 4px;
    display: flex;
    align-items: center;
    justify-content: space-between;
    padding: 0 6px 0 3px;
}

.spin-arrows {
    display: flex;
    flex-direction: column;
    gap: 4px;
}

.ribbon-collapse {
    margin: 85px 0 0 12px;
}

/* main area */
.main {
    flex: 1;
    display: flex;
    min-height: 0;
}

.slides-panel {
    width: 163px;
    display: flex;
    flex: none;
    border-right: 1px solid #e4e4e4;
    overflow: hidden;
}

.slides-list {
    width: 148px;
    padding-top: 20px;
    flex: none;
    overflow: hidden;
}

.slide-row {
    height: 77px;
    display: flex;
    flex: none;
}

.slide-num {
    width: 32px;
    padding-left: 10px;
    font-family: "Noto Sans", sans-serif;
    font-size: 15px;
    line-height: 16px;
    color: #444;
    flex: none;
    margin-top: -5px;
}

.slide-num svg {
    margin-top: 3px;
    margin-left: -2px;
}

.slide-num-active {
    color: #c43e1c;
}

.thumb {
    width: 95px;
    height: 56px;
    background-color: #f1f2f6;
    border-radius: 4px;
    box-shadow: 0 0 1px rgba(0, 0, 0, 0.55);
    overflow: hidden;
    flex: none;
}

.thumb-white {
    background-color: white;
}

.thumb-active {
    box-shadow: none;
    outline: 2px solid #b7472a;
    outline-offset: 1px;
}

.panel-scroll {
    width: 10px;
    display: flex;
    flex-direction: column;
    align-items: center;
    padding-top: 5px;
    flex: none;
}

.arrow-up {
    width: 0;
    height: 0;
    border-left: 5px solid transparent;
    border-right: 5px solid transparent;
    border-bottom: 7px solid #777;
    flex: none;
}

.arrow-down {
    width: 0;
    height: 0;
    border-left: 5px solid transparent;
    border-right: 5px solid transparent;
    border-top: 7px solid #777;
    flex: none;
}

.panel-thumb {
    width: 9px;
    height: 447px;
    margin: 5px 0 46px;
    border-radius: 5px;
    background-color: #7b7b7b;
    flex: none;
}

.editor {
    flex: 1;
    display: flex;
    flex-direction: column;
    min-width: 0;
    border-right: 1px solid #e4e4e4;
}

.canvas-area {
    height: 489px;
    padding: 13px 0 0 31px;
    display: flex;
    flex: none;
}

.slide {
    position: relative;
    width: 777px;
    height: 461px;
    background-color: #f1f2f6;
    border: 1px solid #cfcfcf;
    flex: none;
}

.shape-yellow {
    position: absolute;
    left: 158px;
    top: 124px;
}

.shape-blue {
    position: absolute;
    left: 367px;
    top: 124px;
    width: 118px;
    height: 179px;
    background-color: #6a99b3;
    border: 1px solid #5f7686;
}

.handle {
    position: absolute;
    width: 11px;
    height: 11px;
    border-radius: 50%;
    background-color: white;
    border: 1.5px solid #6e6e6e;
}

.h-tl { left: -6px; top: -6px; }
.h-tc { left: 52px; top: -6px; }
.h-tr { right: -6px; top: -6px; }
.h-ml { left: -6px; top: 83px; }
.h-mr { right: -6px; top: 83px; }
.h-bl { left: -6px; bottom: -6px; }
.h-bc { left: 52px; bottom: -6px; }
.h-br { right: -6px; bottom: -6px; }

.rotate-line {
    position: absolute;
    left: 57px;
    top: -24px;
    width: 1px;
    height: 19px;
    background-color: #777;
}

.rotate-icon {
    position: absolute;
    left: 48px;
    top: -46px;
}

.canvas-scroll {
    width: 12px;
    margin-left: 29px;
    margin-top: -8px;
    display: flex;
    flex-direction: column;
    align-items: center;
    flex: none;
}

.canvas-thumb {
    width: 9px;
    height: 58px;
    margin: 120px 0 234px;
    border-radius: 5px;
    background-color: #7b7b7b;
    flex: none;
}

.page-arrow {
    margin-top: 6px;
}

.notes-bar {
    flex: 1;
    border-top: 1px solid #e0e0e0;
    padding: 7px 0 0 12px;
    font-size: 14px;
    color: #666;
}

/* format pane */
.format-pane {
    width: 265px;
    padding-left: 12px;
    flex: none;
}

.pane-head {
    height: 54px;
    display: flex;
    align-items: center;
}

.pane-title {
    font-family: "Noto Sans", sans-serif;
    font-size: 18.7px;
    font-weight: 300;
    color: #444;
    width: 195px;
    margin-bottom: 2px;
}

.pane-chevron {
    margin-left: -1px;
}

.pane-close {
    margin-left: 18px;
}

.pane-tabs {
    height: 27px;
    display: flex;
    margin-left: 5px;
    gap: 24px;
    line-height: 20px;
}

.pane-tab {
    height: 27px;
    white-space: nowrap;
    color: #444;
}

.pane-tab-active {
    color: #333;
    font-weight: 500;
    border-bottom: 2px solid #c43e1c;
}

.pane-icons {
    display: flex;
    align-items: center;
    height: 30px;
    margin-top: 13px;
    margin-left: 2px;
}

.pane-icon {
    width: 30px;
    height: 30px;
    display: flex;
    align-items: center;
    justify-content: center;
}

.pane-icon-active {
    background-color: white;
    border: 1px solid #999;
    border-radius: 4px;
}

.pane-icon-pent {
    margin-left: 14px;
}

.pane-icon-size {
    margin-left: 18px;
}

.pane-rule {
    height: 1px;
    width: 241px;
    margin-top: 14px;
    background-color: #e2e2e2;
}

.section-head {
    display: flex;
    align-items: center;
    gap: 5px;
    height: 20px;
    margin: 6px 0 0 7px;
    font-weight: 700;
}

.section-line {
    margin-top: 15px;
}

.radios {
    margin: 10px 0 0 19px;
    display: flex;
    flex-direction: column;
}

.radio-row {
    height: 21.8px;
    display: flex;
    align-items: center;
    gap: 6px;
    white-space: nowrap;
}

.radio {
    width: 12px;
    height: 12px;
    margin-bottom: 2px;
    border-radius: 50%;
    background-color: white;
    border: 1px solid #888;
    flex: none;
}

.radio-on {
    border: 3.5px solid #c43e1c;
}

.color-row {
    display: flex;
    align-items: center;
    justify-content: space-between;
    width: 192px;
    margin: 12px 0 0 30px;
    height: 28px;
}

.color-btn {
    width: 43px;
    height: 28px;
    background-color: white;
    border: 1px solid #aaa;
    border-radius: 4px;
    display: flex;
    align-items: center;
    justify-content: center;
    gap: 3px;
}

.trans-row {
    display: flex;
    align-items: center;
    margin: 6px 0 0 30px;
    height: 20px;
    width: 192px;
    white-space: nowrap;
}

.trans-row > span {
    width: 76px;
    flex: none;
}

.trans-slider {
    margin-right: 8px;
}

.spin-trans {
    width: 68px;
    height: 20px;
    padding-left: 6px;
    font-size: 10.5px;
    flex: none;
}

.spin-trans .spin-arrows {
    gap: 2px;
}

/* status bar */
.statusbar {
    height: 22px;
    display: flex;
    align-items: center;
    flex: none;
    padding-left: 11px;
    font-size: 10.7px;
    background-color: #f2f2f2;
    white-space: nowrap;
}

.st-slide {
    width: 52px;
}

.st-book {
    margin-left: 18px;
}

.st-lang {
    margin-left: 16px;
    width: 109px;
}

.st-access {
    margin-left: 16px;
}

.st-check {
    margin-left: 3px;
    font-weight: 500;
}

.st-right {
    margin-left: auto;
    display: flex;
    align-items: center;
    height: 22px;
}

.st-notes {
    width: 27px;
    margin-left: 1px;
    margin-right: 19px;
}

.view-btn {
    width: 37px;
    height: 22px;
    display: flex;
    align-items: center;
    justify-content: center;
}

.view-active {
    background-color: #dcdcdc;
}

.zoom-sign {
    font-size: 13px;
    width: 10px;
    text-align: center;
}

.zoom-minus {
    margin-left: 7px;
}

.zoom-track {
    position: relative;
    width: 94px;
    height: 1px;
    margin: 0 3px;
    background-color: #666;
}

.zoom-knob {
    position: absolute;
    left: 30px;
    top: -5px;
    width: 4px;
    height: 11px;
    background-color: #666;
}

.zoom-mid {
    position: absolute;
    left: 47px;
    top: -2px;
    width: 1px;
    height: 5px;
    background-color: #666;
}

.zoom-val {
    margin-left: 10px;
    width: 24px;
    color: #555;
}

.zoom-fit {
    margin-left: 14px;
    margin-right: 4px;
}

/* burned-in caption and mouse pointer */
.watermark {
    position: absolute;
    left: 625px;
    top: 641px;
    font-family: "Liberation Sans", sans-serif;
    font-size: 19.4px;
    line-height: 22px;
    color: #111;
    white-space: nowrap;
}

.cursor {
    position: absolute;
    left: 935px;
    top: 476px;
}
```
